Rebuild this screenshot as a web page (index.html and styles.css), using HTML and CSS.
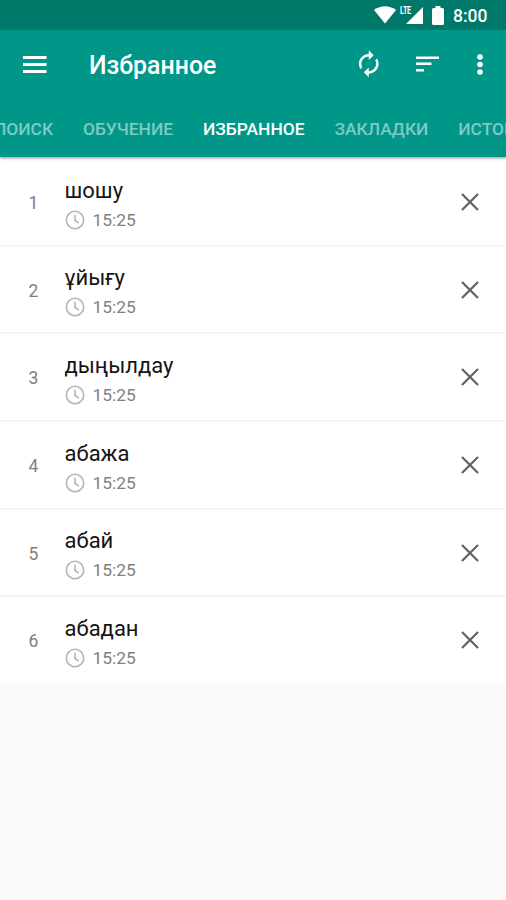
FILE: index.html
```html
<!DOCTYPE html>
<html lang="ru">
<head>
<meta charset="utf-8">
<title>Избранное</title>
<link rel="stylesheet" href="styles.css">
</head>
<body>
<div class="app">
  <header class="header">
    <div class="status">
      <svg class="wifi" width="22" height="18" viewBox="0 0 22 18"><path d="M11 17.500 0 4Q11-3.500 22 4Z"/></svg>
      <div class="signal"><span class="lte">LTE</span><svg width="17" height="17" viewBox="0 0 17 17"><path d="M17 0V17H0Z"/></svg></div>
      <svg class="battery" width="12" height="19" viewBox="0 0 12 19"><path d="M3.500 0h5v2H10.500Q12 2 12 3.500v14Q12 19 10.500 19h-9Q0 19 0 17.500v-14Q0 2 1.500 2h2Z"/></svg>
      <span class="clock">8:00</span>
    </div>
    <div class="toolbar">
      <svg class="menu" width="24" height="18" viewBox="0 0 24 18"><path d="M0 0h23.500v3H0zM0 7h23.500v3H0zM0 14h23.500v3H0z"/></svg>
      <h1>Избранное</h1>
      <svg class="sync" width="29.500" height="29.500" viewBox="0 0 24 24"><path d="M12 6v3l4-4-4-4v3c-4.420 0-8 3.580-8 8 0 1.570.460 3.030 1.240 4.260L6.700 14.800c-.450-.830-.700-1.790-.700-2.800 0-3.310 2.690-6 6-6zm6.760 1.740L17.300 9.200c.440.840.700 1.790.700 2.800 0 3.310-2.690 6-6 6v-3l-4 4 4 4v-3c4.420 0 8-3.580 8-8 0-1.570-.460-3.030-1.240-4.260z"/></svg>
      <svg class="sort" width="24" height="17" viewBox="0 0 24 17"><path d="M0 .5h23v2.500H0zM0 6.500h15.500V9H0zM0 13h8v2.500H0z"/></svg>
      <svg class="more" width="6" height="21" viewBox="0 0 6 21"><circle cx="3" cy="3" r="2.800"/><circle cx="3" cy="10.500" r="2.800"/><circle cx="3" cy="18" r="2.800"/></svg>
    </div>
    <nav class="tabs"><span>ПОИСК</span><span>ОБУЧЕНИЕ</span><span class="active">ИЗБРАННОЕ</span><span>ЗАКЛАДКИ</span><span>ИСТОРИЯ</span></nav>
  </header>
  <svg class="defs" width="0" height="0">
    <symbol id="clock" viewBox="0 0 20 20"><circle cx="10" cy="10" r="8.700"/><path d="M10 4.800V10.500L13.700 13"/></symbol>
    <symbol id="close" viewBox="0 0 18 18"><path d="M1 1 17 17M17 1 1 17"/></symbol>
  </svg>
  <main class="list">
    <div class="row"><span class="num">1</span><div class="body"><div class="word">шошу</div><div class="time"><svg><use href="#clock"/></svg>15:25</div></div><svg class="close"><use href="#close"/></svg></div>
    <div class="row"><span class="num">2</span><div class="body"><div class="word">ұйығу</div><div class="time"><svg><use href="#clock"/></svg>15:25</div></div><svg class="close"><use href="#close"/></svg></div>
    <div class="row"><span class="num">3</span><div class="body"><div class="word">дыңылдау</div><div class="time"><svg><use href="#clock"/></svg>15:25</div></div><svg class="close"><use href="#close"/></svg></div>
    <div class="row"><span class="num">4</span><div class="body"><div class="word">абажа</div><div class="time"><svg><use href="#clock"/></svg>15:25</div></div><svg class="close"><use href="#close"/></svg></div>
    <div class="row"><span class="num">5</span><div class="body"><div class="word">абай</div><div class="time"><svg><use href="#clock"/></svg>15:25</div></div><svg class="close"><use href="#close"/></svg></div>
    <div class="row"><span class="num">6</span><div class="body"><div class="word">абадан</div><div class="time"><svg><use href="#clock"/></svg>15:25</div></div><svg class="close"><use href="#close"/></svg></div>
  </main>
</div>
</body>
</html>
```
FILE: styles.css
```css
* { box-sizing: border-box; }
body { margin: 0; background: #fafafa; font-family: Roboto, "Noto Sans", sans-serif; }
svg { display: block; flex: none; }
.app { width: 506px; height: 900px; overflow: hidden; }
.header { position: relative; height: 157px; background: #009688; color: #fff; box-shadow: 0 1px 3px rgba(0,0,0,.45); }
.header svg { fill: #fff; }
.status { height: 30px; background: #00796b; display: flex; align-items: center; justify-content: flex-end; padding-right: 18px; }
.wifi { margin-right: 8px; }
.signal { position: relative; width: 19px; height: 17px; margin-right: 9px; padding-left: 2px; }
.lte { position: absolute; left: -4px; top: -1px; font-size: 11px; line-height: 9px; font-weight: 700; letter-spacing: -.3px; transform: scaleX(.65); transform-origin: left; }
.battery { margin-right: 9px; }
.clock { width: 35px; font-size: 17.500px; font-weight: 500; line-height: 30px; padding-top: 2px; white-space: nowrap; }
.toolbar { height: 70px; display: flex; align-items: center; padding: 0 23px; }
.toolbar h1 { margin: 2px auto 0 42px; font-size: 24.900px; font-weight: 500; line-height: 36px; }
.menu { margin-top: -1px; }
.sync { margin: -2px 33px 0 0; }
.sort { margin: -1px 37px 0 0; }
.more { margin-top: -2px; }
.tabs { display: flex; gap: 29.900px; margin-left: -6px; height: 57px; overflow: hidden; font-size: 17.400px; font-weight: 500; line-height: 58px; white-space: nowrap; color: rgba(255,255,255,.5); }
.active { color: #fff; }
.defs { position: absolute; }
.list { background: #fff; height: 526px; padding-top: 2px; }
.row { height: 87.700px; display: flex; border-bottom: 2px solid #f5f5f5; }
.row:last-child { border: 0; }
.num { width: 64.500px; padding: 33px 0 0 28.500px; font-size: 17.500px; line-height: 22px; color: #808080; }
.body { flex: 1; padding-top: 16.500px; }
.word { font-size: 22px; line-height: 30px; color: #151515; }
.time { display: flex; align-items: center; gap: 8px; height: 28px; font-size: 17.400px; color: #808080; }
.time svg { width: 20px; height: 20px; fill: none; stroke: #b5b5b5; stroke-width: 1.600; }
.close { width: 18px; height: 18px; margin: 34px 27px 0 0; fill: none; stroke: #616161; stroke-width: 2.200; }
```
